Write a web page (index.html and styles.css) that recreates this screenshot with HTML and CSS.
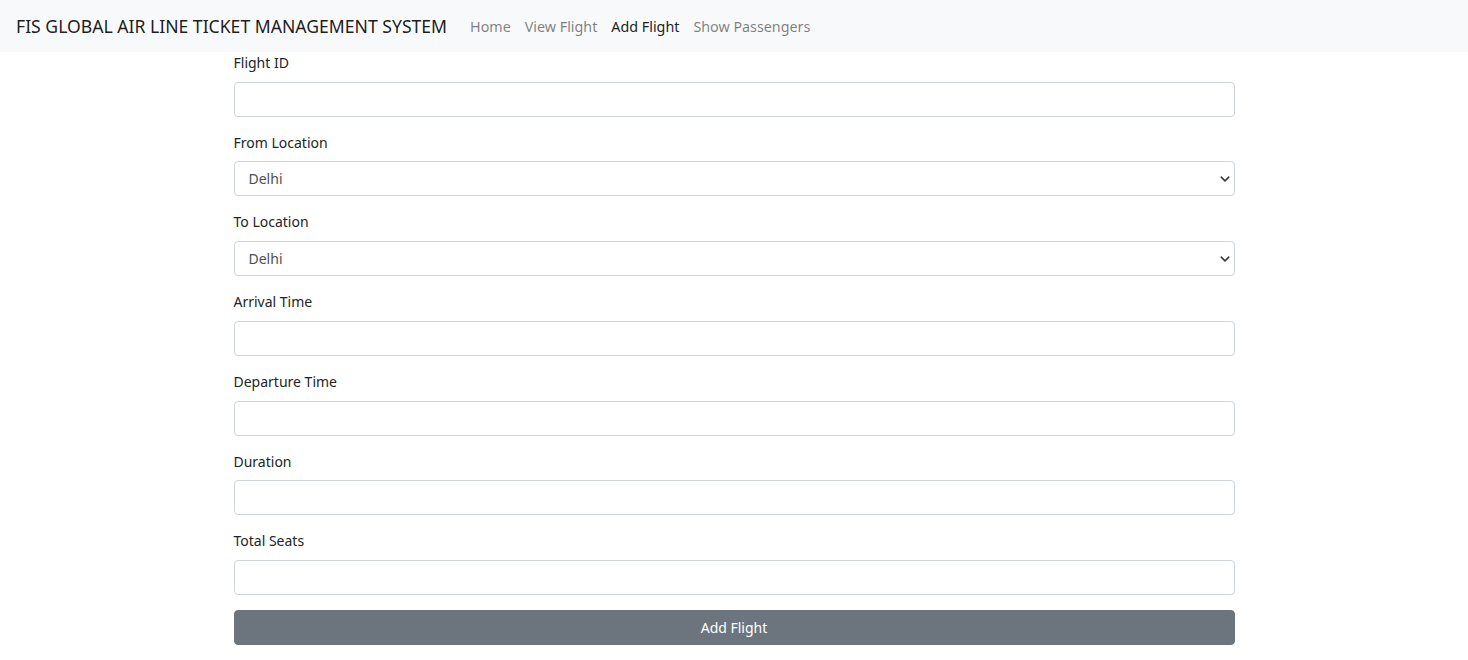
FILE: index.html
```html
<!DOCTYPE html>
<html lang="en">
<head>
<meta charset="utf-8">
<title>Add Flight</title>
<link rel="stylesheet" href="styles.css">
</head>
<body>
<nav class="navbar">
  <span class="brand">FIS GLOBAL AIR LINE TICKET MANAGEMENT SYSTEM</span>
  <ul class="nav-links">
    <li><a class="nav-link">Home</a></li>
    <li><a class="nav-link">View Flight</a></li>
    <li><a class="nav-link active">Add Flight</a></li>
    <li><a class="nav-link">Show Passengers</a></li>
  </ul>
</nav>
<main class="container">
  <form class="flight-form">
    <div class="group">
      <label class="form-label">Flight ID</label>
      <input class="form-control" type="text">
    </div>
    <div class="group">
      <label class="form-label">From Location</label>
      <div class="select-wrap">
        <select class="form-control form-select"><option>Delhi</option></select>
        <svg class="chev" viewBox="0 0 16 16" width="10" height="10"><path d="M2 5l6 6 6-6" fill="none" stroke="#343a40" stroke-width="2.4" stroke-linecap="round" stroke-linejoin="round"/></svg>
      </div>
    </div>
    <div class="group">
      <label class="form-label">To Location</label>
      <div class="select-wrap">
        <select class="form-control form-select"><option>Delhi</option></select>
        <svg class="chev" viewBox="0 0 16 16" width="10" height="10"><path d="M2 5l6 6 6-6" fill="none" stroke="#343a40" stroke-width="2.4" stroke-linecap="round" stroke-linejoin="round"/></svg>
      </div>
    </div>
    <div class="group">
      <label class="form-label">Arrival Time</label>
      <input class="form-control" type="text">
    </div>
    <div class="group">
      <label class="form-label">Departure Time</label>
      <input class="form-control" type="text">
    </div>
    <div class="group">
      <label class="form-label">Duration</label>
      <input class="form-control" type="text">
    </div>
    <div class="group">
      <label class="form-label">Total Seats</label>
      <input class="form-control" type="text">
    </div>
    <button class="btn" type="button">Add Flight</button>
  </form>
</main>
</body>
</html>
```
FILE: styles.css
```css
* { box-sizing: border-box; }
html, body { margin: 0; padding: 0; }
body {
  font-family: "Noto Sans", "Open Sans", sans-serif;
  font-size: 14px;
  color: #212529;
  background: #fff;
}
.navbar {
  height: 52px;
  background: #f8f9fa;
  display: flex;
  align-items: center;
  padding: 0 16px;
}
.brand {
  font-size: 17.6px;
  color: rgba(0,0,0,.9);
  margin-right: 16px;
  white-space: nowrap;
}
.nav-links {
  list-style: none;
  margin: 0;
  padding: 0;
  display: flex;
}
.nav-link {
  display: block;
  padding: 0 7px;
  color: rgba(0,0,0,.5);
  font-size: 14.3px;
}
.nav-link.active { color: rgba(0,0,0,.9); }
.container {
  width: 1001px;
  margin: 0 auto;
}
.flight-form { display: flex; flex-direction: column; }
.group { display: flex; flex-direction: column; margin-bottom: 15px; }
.form-label {
  line-height: 21.7px;
  margin-bottom: 8px;
}
.form-control {
  display: block;
  width: 100%;
  height: 35px;
  border: 1px solid #ced4da;
  border-radius: 4px;
  background: #fff;
  font-family: inherit;
  font-size: 14px;
  color: #495057;
  padding: 0 14px;
  margin: 0;
  outline: none;
}
.select-wrap { position: relative; }
.form-select { appearance: none; -webkit-appearance: none; padding-right: 36px; }
.chev { position: absolute; right: 5px; top: 13px; pointer-events: none; }
.btn {
  height: 35px;
  width: 100%;
  border: 1px solid #6c757d;
  border-radius: 4px;
  background: #6c757d;
  color: #fff;
  font-family: inherit;
  font-size: 14px;
}
```
